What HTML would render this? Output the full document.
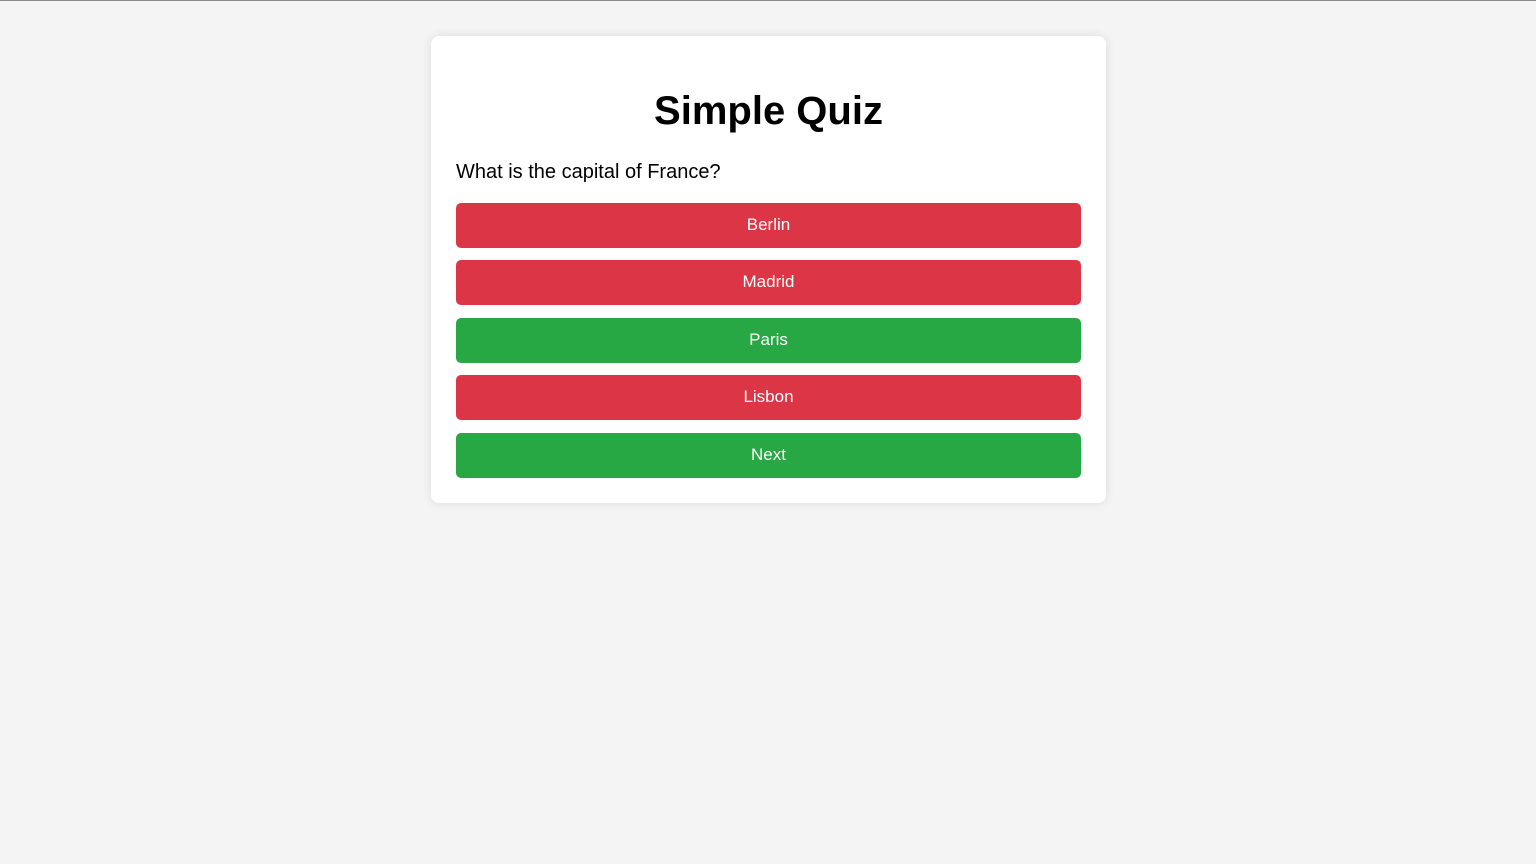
<!DOCTYPE html>
<html><head><style>
html,body{margin:0;padding:0}
body{width:1536px;height:864px;background:#f4f4f4;font-family:"Liberation Sans",Arial,sans-serif;border-top:1px solid #8a8a8a;box-sizing:border-box;position:relative;overflow:hidden}
.card{position:absolute;left:431px;top:35px;width:625px;padding:25px;height:417px;background:#fff;border-radius:8px;box-shadow:0 0 10px rgba(0,0,0,0.1)}
h1{margin:0;position:absolute;top:51px;left:0;right:0;text-align:center;font-size:40px;font-weight:bold;line-height:48px;color:#000}
.q{position:absolute;top:124px;left:25px;font-size:20px;line-height:24px;color:#000}
.b{position:absolute;left:25px;width:625px;height:45px;border-radius:5px;color:#fff;font-size:17px;line-height:43px;text-align:center}
.r{background:#dc3545}.g{background:#28a745}
</style></head><body>
<div class="card">
<h1>Simple Quiz</h1>
<div class="q">What is the capital of France?</div>
<div class="b r" style="top:167px">Berlin</div>
<div class="b r" style="top:224px">Madrid</div>
<div class="b g" style="top:282px">Paris</div>
<div class="b r" style="top:339px">Lisbon</div>
<div class="b g" style="top:397px">Next</div>
</div>
</body></html>
